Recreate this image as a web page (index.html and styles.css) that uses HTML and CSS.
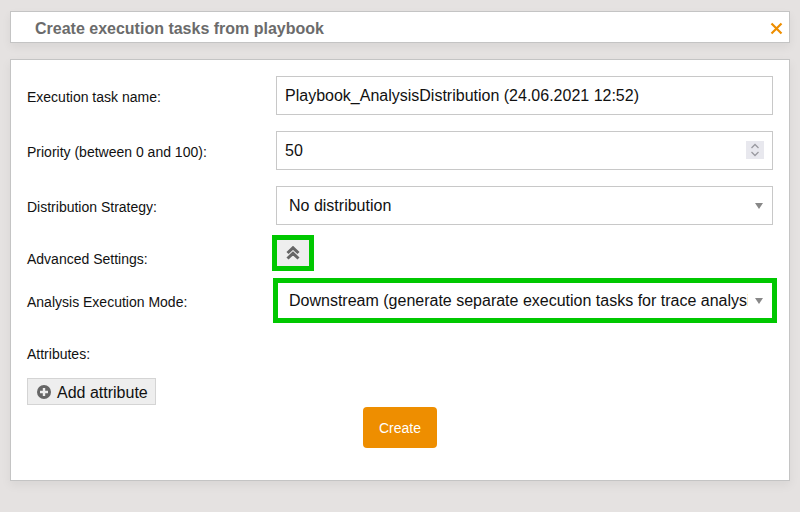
FILE: index.html
```html
<!DOCTYPE html>
<html lang="en">
<head>
<meta charset="utf-8">
<title>Create execution tasks from playbook</title>
<link rel="stylesheet" href="styles.css">
</head>
<body>
<header class="dialog-header">
  <h1 class="dialog-title">Create execution tasks from playbook</h1>
  <button class="close" type="button" aria-label="Close">
    <svg width="13" height="13" viewBox="0 0 13 13"><path d="M1.500 1.500 11.500 11.500M11.500 1.500 1.500 11.500" stroke="#ee8e00" stroke-width="2.200" fill="none"/></svg>
  </button>
</header>
<main class="panel">
  <div class="row">
    <span class="label">Execution task name:</span>
    <div class="field field-text">Playbook_AnalysisDistribution (24.06.2021 12:52)</div>
  </div>
  <div class="row">
    <span class="label">Priority (between 0 and 100):</span>
    <div class="field field-text field-number">
      <span>50</span>
      <span class="spinner">
        <svg width="18" height="18" viewBox="0 0 18 18"><path d="M5.500 7 9 3.500 12.500 7M5.500 11 9 14.500 12.500 11" stroke="#9a9aa0" stroke-width="1.300" fill="none"/></svg>
      </span>
    </div>
  </div>
  <div class="row">
    <span class="label">Distribution Strategy:</span>
    <div class="field field-select"><span class="select-text">No distribution</span><span class="caret"></span></div>
  </div>
  <div class="row row-toggle">
    <span class="label">Advanced Settings:</span>
    <button class="toggle" type="button" aria-label="Collapse">
      <svg width="14" height="14" viewBox="0 0 14 14"><path d="M1.500 7 7 1.800 12.500 7M1.500 12.500 7 7.300 12.500 12.500" stroke="#666" stroke-width="3" fill="none"/></svg>
    </button>
  </div>
  <div class="row row-mode">
    <span class="label">Analysis Execution Mode:</span>
    <div class="field field-select field-highlight"><span class="select-text">Downstream (generate separate execution tasks for trace analysis)</span><span class="caret"></span></div>
  </div>
  <p class="attributes-label">Attributes:</p>
  <button class="add" type="button">
    <svg width="14" height="14" viewBox="0 0 14 14"><circle cx="7" cy="7" r="7" fill="#666"/><path d="M7 3v8M3 7h8" stroke="#eee" stroke-width="2.400"/></svg>
    <span class="add-text">Add attribute</span>
  </button>
  <div class="actions"><button class="create" type="button">Create</button></div>
</main>
</body>
</html>
```
FILE: styles.css
```css
* { box-sizing: border-box; }
html, body { height: 100%; }
body {
  margin: 0;
  padding: 11px 10px 0;
  background: #e5e2e1;
  font-family: "Liberation Sans", Arial, sans-serif;
  color: #111;
  overflow: hidden;
}
button { font-family: inherit; cursor: pointer; }
.dialog-header {
  height: 32px;
  background: #fff;
  border: 1px solid #c4c4c4;
  box-shadow: 0 4px 10px rgba(0,0,0,.06);
  display: flex;
  align-items: center;
  justify-content: space-between;
  padding: 0 6px 0 24px;
}
.dialog-title {
  margin: 0;
  padding-top: 4px;
  font-size: 16px;
  font-weight: bold;
  color: #6b6b6b;
}
.close {
  border: 0;
  background: none;
  padding: 0;
  display: flex;
  margin-top: 3px;
}
.panel {
  margin-top: 16px;
  height: 422px;
  background: #fff;
  border: 1px solid #c4c4c4;
  box-shadow: 0 4px 10px rgba(0,0,0,.06);
  padding: 16px 16px 0;
}
.row {
  display: flex;
  align-items: center;
  margin-bottom: 16px;
}
.label {
  width: 249px;
  flex: none;
  font-size: 14px;
  padding-top: 3px;
}
.field {
  width: 497px;
  height: 39px;
  border: 1px solid #c8c8c8;
  font-size: 16px;
  display: flex;
  align-items: center;
  background: #fff;
}
.field-text { padding: 0 8px; }
.field-number { justify-content: space-between; padding-right: 8px; }
.spinner {
  width: 18px;
  height: 18px;
  background: #e8e8ee;
  display: flex;
  margin-top: -2px;
}
.field-select { padding: 0 9px 0 12px; justify-content: space-between; }
.select-text {
  flex: 1;
  min-width: 0;
  white-space: nowrap;
  overflow: hidden;
  margin-right: 7px;
}
.caret {
  width: 0;
  height: 0;
  flex: none;
  border-left: 4px solid transparent;
  border-right: 4px solid transparent;
  border-top: 6px solid #888;
}
.row-toggle { margin: -6px 0 7px; height: 36px; }
.row-toggle .label { padding-top: 11px; }
.toggle {
  width: 42px;
  height: 36px;
  margin-left: -4px;
  background: #eee;
  border: 5px solid #00c800;
  padding: 0;
  display: flex;
  align-items: center;
  justify-content: center;
}
.row-mode { margin-bottom: 0; height: 45px; }
.field-highlight {
  width: 504px;
  height: 45px;
  margin-left: -3px;
  border: 5px solid #00c800;
  padding: 0 9px 0 11px;
}
.attributes-label { margin: 23px 0 0; font-size: 14px; line-height: 16px; }
.add {
  display: flex;
  align-items: center;
  gap: 6px;
  margin-top: 16px;
  width: 129px;
  height: 27px;
  padding: 0 0 0 9px;
  background: #eee;
  border: 1px solid #d4d4d4;
  font-size: 16px;
  color: #111;
}
.add-text { padding-top: 2px; }
.actions { display: flex; justify-content: center; margin-top: 2px; }
.create {
  width: 74px;
  height: 41px;
  background: #ee8e00;
  border: 0;
  border-radius: 4px;
  color: #fff;
  font-size: 14px;
}
```
